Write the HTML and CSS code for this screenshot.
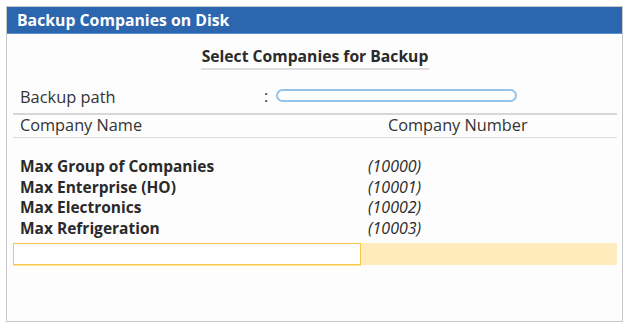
FILE: index.html
```html
<!DOCTYPE html>
<html>
<head>
<meta charset="utf-8">
<link rel="stylesheet" href="styles.css">
</head>
<body>
<div class="frame">
  <div class="titlebar">Backup Companies on Disk</div>
  <div class="content">
    <div class="heading"><span>Select Companies for Backup</span></div>
    <div class="pathrow">
      <span class="label">Backup path</span>
      <span class="colon">:</span>
      <span class="input"></span>
    </div>
    <div class="colhead">
      <span class="c1">Company Name</span>
      <span class="c2">Company Number</span>
    </div>
    <div class="list">
      <div class="row"><span class="name">Max Group of Companies</span><span class="num">(10000)</span></div>
      <div class="row"><span class="name">Max Enterprise (HO)</span><span class="num">(10001)</span></div>
      <div class="row"><span class="name">Max Electronics</span><span class="num">(10002)</span></div>
      <div class="row"><span class="name">Max Refrigeration</span><span class="num">(10003)</span></div>
    </div>
    <div class="selrow">
      <div class="selcell"></div>
      <div class="selfill"></div>
    </div>
  </div>
</div>
</body>
</html>
```
FILE: styles.css
```css
html, body {
  margin: 0;
  padding: 0;
  background: #ffffff;
}
body {
  padding: 6px 0 0 6px;
  font-family: "Open Sans", "Noto Sans", sans-serif;
  color: #2a2a2a;
}
.frame {
  width: 615px;
  height: 314px;
  border: 1px solid #c8c8c8;
  background: #fdfdfd;
  box-sizing: content-box;
}
.titlebar {
  height: 27px;
  background: #2b66af;
  color: #ffffff;
  font-weight: 700;
  font-size: 15.8px;
  line-height: 26px;
  padding-left: 10px;
  border-bottom: 1px solid #5a8fd0;
  box-sizing: border-box;
}
.content {
  padding: 0 5px 0 6px;
}
.heading {
  display: flex;
  justify-content: center;
  padding-top: 12px;
  height: 41px;
  box-sizing: border-box;
}
.heading span {
  font-weight: 700;
  font-size: 15.7px;
  line-height: 20px;
  padding: 0 1px 1px;
  border-bottom: 2px solid #dedede;
  height: 21px;
  color: #2a2a2a;
}
.pathrow {
  display: flex;
  height: 40px;
  padding-top: 12px;
  box-sizing: border-box;
  border-bottom: 2px solid #d6d6d6;
  align-items: flex-start;
}
.pathrow .label {
  font-size: 16.4px;
  line-height: 20px;
  padding-left: 7px;
  width: 244px;
  color: #333;
}
.pathrow .colon {
  font-size: 16px;
  line-height: 18px;
  width: 12px;
  color: #333;
}
.pathrow .input {
  margin-top: 2px;
  width: 241px;
  height: 13px;
  border: 2px solid #92c3ea;
  border-radius: 7px;
  box-sizing: border-box;
  background: #ffffff;
}
.colhead {
  display: flex;
  height: 22px;
  border-bottom: 1px solid #dcdcdc;
  font-size: 16.3px;
  line-height: 20px;
  color: #333;
}
.colhead .c1 {
  padding-left: 7px;
  width: 368px;
}
.list {
  padding-top: 18px;
}
.row {
  display: flex;
  font-size: 15.5px;
  line-height: 20.6px;
}
.row .name {
  font-weight: 700;
  width: 348px;
  padding-left: 7px;
  color: #2a2a2a;
}
.row .num {
  font-style: italic;
  font-size: 16px;
  color: #2a2a2a;
}
.selrow {
  display: flex;
  margin-top: 5px;
  height: 23px;
}
.selcell {
  width: 348px;
  border: 1px solid #f7c74a;
  box-shadow: 0 1px 0 #ffe39a;
  background: #ffffff;
  box-sizing: border-box;
  height: 22px;
}
.selfill {
  flex: 1;
  background: #ffebbb;
  height: 22px;
}
```
